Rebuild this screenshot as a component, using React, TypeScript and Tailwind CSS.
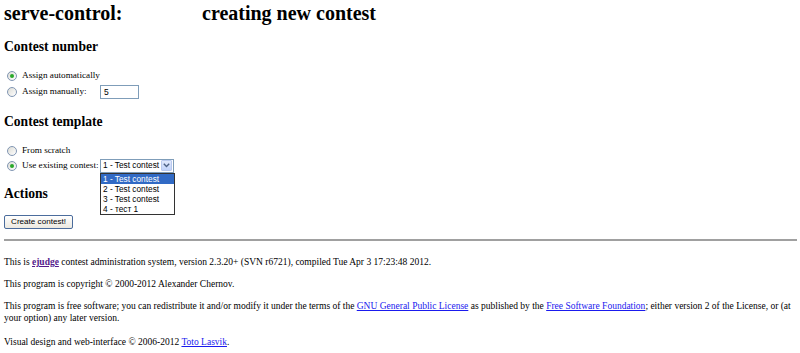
import React from "react";

const Radio = ({ checked }: { checked?: boolean }) => (
  <span className="ml-[3px] mr-[5px] flex h-[10px] w-[10px] shrink-0 items-center justify-center rounded-full border border-[#8196b3] bg-[linear-gradient(135deg,#dcdcd6,#ffffff)]">
    {checked && <span className="h-[4px] w-[4px] rounded-full bg-[#2aa82a]" />}
  </span>
);

const App = () => {
  const contests = ["1 - Test contest", "2 - Test contest", "3 - Test contest", "4 - тест 1"];

  return (
    <div className="h-[353px] w-[800px] overflow-hidden bg-white pl-[4px] pr-[3px] font-['Liberation_Serif','Times_New_Roman',serif] text-black">
      <h1 className="mt-[1px] flex h-[24px] text-[20px] font-bold leading-[24px]">
        <span className="w-[198px]">serve-control:</span>
        <span>creating new contest</span>
      </h1>

      <h2 className="mt-[14px] h-[16px] text-[13.6px] font-bold leading-[16px]">Contest number</h2>
      <div className="mt-[13px] text-[9.2px]">
        <label className="flex h-[16px] items-center">
          <Radio checked />
          <span className="w-[78px] whitespace-nowrap">Assign automatically</span>
        </label>
        <label className="flex h-[16px] items-center">
          <Radio />
          <span className="w-[78px] whitespace-nowrap">Assign manually:</span>
          <span className="flex h-[14px] w-[39px] items-center border border-[#7f9db9] pl-[3px] font-['Liberation_Sans',sans-serif] text-[8.5px]">
            5
          </span>
        </label>
      </div>

      <h2 className="mt-[14px] h-[16px] text-[13.6px] font-bold leading-[16px]">Contest template</h2>
      <div className="mt-[13px] text-[9.2px]">
        <label className="flex h-[15px] items-center">
          <Radio />
          <span className="whitespace-nowrap">From scratch</span>
        </label>
        <label className="flex h-[15px] items-center">
          <Radio checked />
          <span className="w-[78px] whitespace-nowrap">Use existing contest:</span>
          <span className="relative flex h-[14px] w-[74px] items-center border border-[#7f9db9] font-['Liberation_Sans',sans-serif] text-[8.3px]">
            <span className="flex-1 whitespace-nowrap pl-[2px]">1 - Test contest</span>
            <span className="mr-[1px] flex h-[11px] w-[11px] items-center justify-center rounded-[1px] border border-[#b9c9ef] bg-[linear-gradient(#e0e8fc,#c2d3fb)]">
              <svg width="7" height="5" viewBox="0 0 7 5">
                <path d="M0.8 0.8 L3.5 3.5 L6.2 0.8" fill="none" stroke="#4d6185" strokeWidth="1.4" />
              </svg>
            </span>
            <ul className="absolute left-[-1px] top-[13px] w-[75px] border border-[#333] bg-white">
              {contests.map((c, i) => (
                <li
                  key={c}
                  className={`h-[10px] whitespace-nowrap pl-[2px] leading-[10px] ${i === 0 ? "bg-[#316ac5] text-white" : ""}`}
                >
                  {c}
                </li>
              ))}
            </ul>
          </span>
        </label>
      </div>

      <h2 className="mt-[13px] h-[16px] text-[13.6px] font-bold leading-[16px]">Actions</h2>
      <button className="mt-[13px] flex h-[14px] w-[69px] items-center justify-center rounded-[2px] border border-[#4b6c9c] bg-[linear-gradient(#ffffff,#ece9e0)] font-['Liberation_Sans',sans-serif] text-[8.1px] leading-none">
        Create contest!
      </button>

      <hr className="mt-[10px] h-[2px] border-0 bg-[#a0a0a0]" />

      <div className="text-[9.5px] leading-[12px]">
        <p className="mt-[15px]">
          This is{" "}
          <a className="font-bold text-[#551a8b] underline" href="#">
            ejudge
          </a>{" "}
          contest administration system, version 2.3.20+ (SVN r6721), compiled Tue Apr 3 17:23:48 2012.
        </p>
        <p className="mt-[10px]">This program is copyright © 2000-2012 Alexander Chernov.</p>
        <p className="mt-[10px]">
          This program is free software; you can redistribute it and/or modify it under the terms of the{" "}
          <a className="text-[#1a1aee] underline" href="#">
            GNU General Public License
          </a>{" "}
          as published by the{" "}
          <a className="text-[#1a1aee] underline" href="#">
            Free Software Foundation
          </a>
          ; either version 2 of the License, or (at your option) any later version.
        </p>
        <p className="mt-[12px]">
          Visual design and web-interface © 2006-2012{" "}
          <a className="text-[#1a1aee] underline" href="#">
            Toto Lasvik
          </a>
          .
        </p>
      </div>
    </div>
  );
};

export default App;
